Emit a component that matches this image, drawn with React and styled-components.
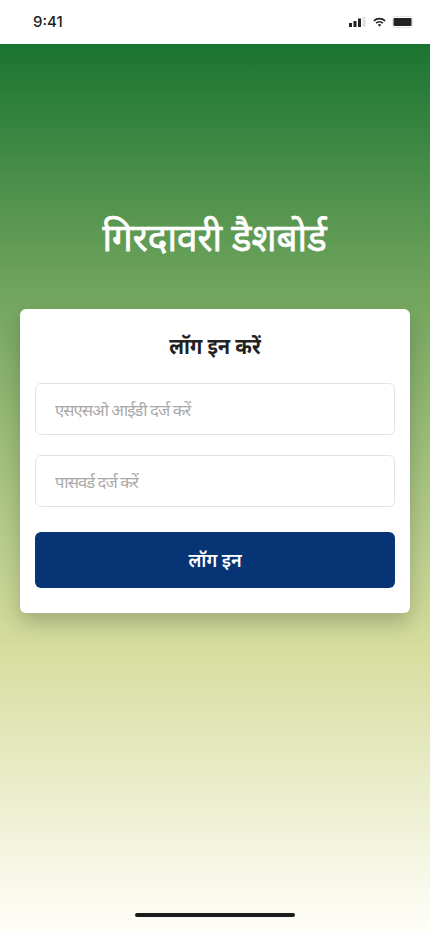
import React from "react";
import styled, { createGlobalStyle } from "styled-components";

const Global = createGlobalStyle`
  * { box-sizing: border-box; }
  html, body { margin: 0; padding: 0; background: #fff; }
  body { font-family: "Noto Sans", "Roboto", "Liberation Sans", sans-serif; }
`;
const Page = styled.div`
  width: 430px; height: 932px; position: relative; overflow: hidden;
  display: flex; flex-direction: column;
`;
const StatusBar = styled.header`
  height: 44px; flex: none; background: #fff;
  display: flex; align-items: center; justify-content: space-between;
  padding: 3px 17px 3px 33px;
`;
const Time = styled.span`
  font: 500 15px/20px Inter, Roboto, sans-serif; color: #222;
`;
const Indicators = styled.div`
  display: flex; align-items: center; gap: 6px;
`;
const Main = styled.main`
  flex: 1; display: flex; flex-direction: column; align-items: center;
  padding: 163px 20px 0;
  background: linear-gradient(180deg, #1a7431 0%, #6fa35c 27%, #d6dd9e 68%, #fffef9 100%);
`;
const Title = styled.h1`
  margin: 0 0 44px; font-size: 38px; line-height: 58px; font-weight: 400; color: #fff;
  -webkit-text-stroke: 0.75px #fff;
  text-align: center; transform: scaleX(.97);
`;
const Card = styled.form`
  width: 390px; background: #fff; border-radius: 6px;
  padding: 20px 15px 25px;
  box-shadow: 0 10px 20px rgba(0,0,0,.2);
  display: flex; flex-direction: column;
`;
const CardTitle = styled.h2`
  margin: 0 0 20px; font-size: 21.5px; line-height: 34px; font-weight: 700; color: #222;
  text-align: center; transform: scaleX(.93);
`;
const Field = styled.input`
  height: 52px; width: 100%; padding: 0 19px; margin-bottom: ${p => p.$gap}px;
  border: 1px solid #e3e3e3; border-radius: 6px; background: #fff;
  font: 400 16.5px "Noto Sans", sans-serif; outline: none;
  &::placeholder { color: #a9a9a9; opacity: 1; letter-spacing: -0.9px; }
`;
const Submit = styled.button`
  height: 56px; width: 100%; border: 0; border-radius: 6px; background: #073475;
  color: #fff; font: 600 19px "Noto Sans", sans-serif;
`;
const SubmitLabel = styled.span`
  display: inline-block; transform: scaleX(.95);
`;
const WifiIcon = styled.svg`
  margin-left: 1px;
`;
const HomeBar = styled.div`
  position: absolute; left: 135px; bottom: 15px; width: 160px; height: 4px;
  border-radius: 2px; background: #1c1c1c;
`;

export default function App() {
  return (
    <Page>
      <Global />
      <StatusBar>
        <Time>9:41</Time>
        <Indicators>
          <svg width="17" height="10" viewBox="0 0 17 10">
            <rect x="0" y="6" width="3" height="4" fill="#222" />
            <rect x="4.5" y="4" width="3" height="6" fill="#222" />
            <rect x="9" y="1.5" width="3" height="8.5" fill="#222" />
            <rect x="13.5" y="0" width="3" height="10" fill="#e2e2e2" />
          </svg>
          <WifiIcon width="13" height="11" viewBox="0 0 15 11">
            <path d="M1 3.6a9.5 9.5 0 0 1 13 0" fill="none" stroke="#222" strokeWidth="2" />
            <path d="M3.6 6.2a5.7 5.7 0 0 1 7.8 0" fill="none" stroke="#222" strokeWidth="2" />
            <path d="M5.6 8.2 7.5 10.5l1.9-2.3a2.8 2.8 0 0 0-3.8 0z" fill="#222" />
          </WifiIcon>
          <svg width="21" height="12" viewBox="0 0 21 12">
            <rect x=".5" y=".5" width="20" height="11" rx="2" fill="none" stroke="#e4e4e4" />
            <rect x="1.5" y="2" width="18" height="8" rx="1" fill="#222" />
          </svg>
        </Indicators>
      </StatusBar>
      <Main>
        <Title>गिरदावरी डैशबोर्ड</Title>
        <Card>
          <CardTitle>लॉग इन करें</CardTitle>
          <Field $gap={20} placeholder="एसएसओ आईडी दर्ज करें" />
          <Field $gap={25} type="password" placeholder="पासवर्ड दर्ज करें" />
          <Submit type="button"><SubmitLabel>लॉग इन</SubmitLabel></Submit>
        </Card>
      </Main>
      <HomeBar />
    </Page>
  );
}
